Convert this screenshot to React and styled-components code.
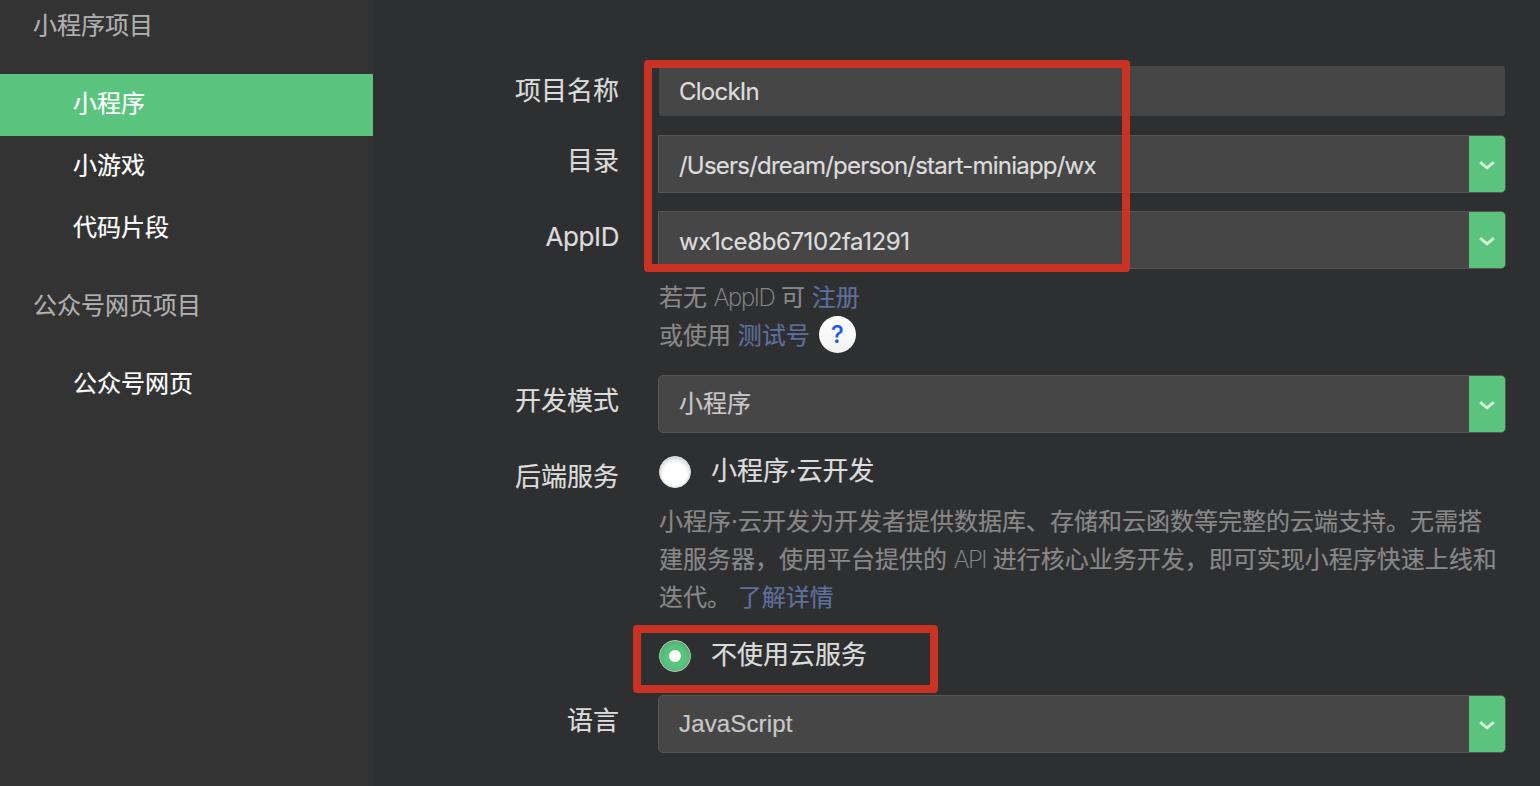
import React from "react";
import styled, { createGlobalStyle } from "styled-components";

const GREEN = "#5ac37d";

const GlobalStyle = createGlobalStyle`
  * { box-sizing: border-box; }
  body {
    margin: 0;
    background: #2e2f31;
    font-family: Inter, "Noto Sans CJK SC", sans-serif;
    overflow: hidden;
  }
`;

const Page = styled.div`
  position: relative;
  display: flex;
  width: 1540px;
  height: 786px;
  overflow: hidden;
  background: #2e2f31;
  white-space: nowrap;
  -webkit-text-stroke: 0.2px currentColor;
`;

const Sidebar = styled.nav`
  width: 373px;
  flex: none;
  background: #333333;
`;

const GroupTitle = styled.h2`
  margin: 0;
  padding: 0 0 2px 33px;
  height: ${(p) => (p.$first ? 74 : 94)}px;
  padding-top: ${(p) => (p.$first ? 7 : 27)}px;
  line-height: 38px;
  font-size: 24px;
  font-weight: 400;
  color: #b0b0b0;
`;

const NavItem = styled.a`
  display: block;
  height: 62px;
  padding-left: 73px;
  line-height: 60px;
  font-size: 24px;
  color: #fff;
  background: ${(p) => (p.$active ? GREEN : "transparent")};
`;

const Form = styled.main`
  flex: 1;
  display: flex;
  flex-direction: column;
  padding: 66px 34px 0 0;
`;

const Row = styled.div`
  display: flex;
  align-items: flex-start;
  margin-top: ${(p) => p.$gap || 0}px;
`;

const Label = styled.label`
  width: 246px;
  margin-right: 39px;
  flex: none;
  text-align: right;
  line-height: ${(p) => p.$line || 52}px;
  font-size: 26px;
  letter-spacing: ${(p) => p.$spacing || 0}px;
  color: #dcdcdc;
`;

const Content = styled.div`
  flex: 1;
`;

const TextInput = styled.div`
  height: 50px;
  margin: 0 1px;
  padding-left: 20px;
  border-radius: 3px;
  background: #464646;
  line-height: 51px;
  font-size: 24px;
  letter-spacing: -0.75px;
  color: #dcdcdc;
`;

const SelectBox = styled.div`
  display: flex;
  height: 58px;
  border: 1px solid #575757;
  border-radius: ${(p) => (p.$editable ? "0 5px 5px 0" : "5px")};
  background: #464646;
  overflow: hidden;
`;

const SelectValue = styled.span`
  flex: 1;
  padding-left: 20px;
  line-height: ${(p) => p.$line || 60}px;
  font-family: ${(p) => (p.$plain ? '"Liberation Sans", "Noto Sans CJK SC", sans-serif' : "inherit")};
  font-size: 24px;
  letter-spacing: ${(p) => p.$spacing || 0}px;
  color: ${(p) => (p.$editable ? "#dcdcdc" : "#c8c8c8")};
`;

const Arrow = styled.span`
  display: flex;
  align-items: center;
  justify-content: center;
  width: 36px;
  background: ${GREEN};
`;

const Hint = styled.div`
  padding: 10px 0 0 1px;
  margin-bottom: -1px;
  line-height: 38px;
  font-size: 24px;
  color: #888888;
`;

const HintLine = styled.div`
  display: flex;
  height: 38px;
  white-space: pre;
`;

const Latin = styled.span`
  font-weight: 200;
  letter-spacing: ${(p) => p.$spacing || 0}px;
`;

const Link = styled.a`
  color: #5f6f9c;
`;

const HelpButton = styled.span`
  width: 37px;
  height: 37px;
  margin: -1px 0 0 9px;
  border-radius: 50%;
  background: linear-gradient(#ffffff, #f2f2f2);
  color: #1f5af0;
  text-align: center;
  line-height: 38px;
  font-size: 24px;
  font-weight: 500;
`;

const RadioRow = styled.div`
  display: flex;
  align-items: center;
  height: 42px;
  margin-top: ${(p) => p.$gap || 0}px;
  padding-left: 1px;
`;

const RadioDot = styled.span`
  display: flex;
  align-items: center;
  justify-content: center;
  width: 32px;
  height: 32px;
  margin-right: 20px;
  border-radius: 50%;
  border: 1px solid ${(p) => (p.$checked ? "#b9c4bc" : "#d8d8d8")};
  background: ${(p) => (p.$checked ? GREEN : "#fff")};
  box-shadow: inset 0 ${(p) => (p.$checked ? 1 : 2)}px 4px rgba(0, 0, 0, 0.2);

  &::after {
    content: "";
    width: 12px;
    height: 12px;
    border-radius: 50%;
    background: ${(p) => (p.$checked ? "#fff" : "transparent")};
  }
`;

const RadioText = styled.span`
  height: 42px;
  line-height: 40px;
  font-size: 26px;
  color: #dcdcdc;
`;

const Highlight = styled.div`
  position: absolute;
  left: ${(p) => p.$x}px;
  top: ${(p) => p.$y}px;
  width: ${(p) => p.$w}px;
  height: ${(p) => p.$h}px;
  border: 8px solid #c93323;
  border-radius: 4px;
  pointer-events: none;
`;

function Select({ children, editable, ...rest }) {
  return (
    <SelectBox $editable={editable}>
      <SelectValue $editable={editable} {...rest}>{children}</SelectValue>
      <Arrow>
        <svg width="18" height="12" viewBox="0 0 18 12" fill="none">
          <path d="M2.2 4.2L9 9.8L15.8 4.2" stroke="#d3f0dc" strokeWidth="3" />
        </svg>
      </Arrow>
    </SelectBox>
  );
}

export default function App() {
  return (
    <>
      <GlobalStyle />
      <Page>
        <Sidebar>
          <GroupTitle $first>小程序项目</GroupTitle>
          <NavItem $active>小程序</NavItem>
          <NavItem>小游戏</NavItem>
          <NavItem>代码片段</NavItem>
          <GroupTitle>公众号网页项目</GroupTitle>
          <NavItem>公众号网页</NavItem>
        </Sidebar>
        <Form>
          <Row>
            <Label $line={50}>项目名称</Label>
            <Content>
              <TextInput>ClockIn</TextInput>
            </Content>
          </Row>
          <Row $gap={19}>
            <Label>目录</Label>
            <Content>
              <Select editable $spacing={-0.78}>/Users/dream/person/start-miniapp/wx</Select>
            </Content>
          </Row>
          <Row $gap={18}>
            <Label $spacing={-0.4}>AppID</Label>
            <Content>
              <Select editable $spacing={-0.4}>wx1ce8b67102fa1291</Select>
              <Hint>
                <HintLine>
                  若无 <Latin $spacing={-1.4}>AppID</Latin> 可 <Link>注册</Link>
                </HintLine>
                <HintLine>
                  或使用 <Link>测试号</Link>
                  <HelpButton>?</HelpButton>
                </HintLine>
              </Hint>
            </Content>
          </Row>
          <Row $gap={21}>
            <Label>开发模式</Label>
            <Content>
              <Select $line={56}>小程序</Select>
            </Content>
          </Row>
          <Row $gap={18}>
            <Label>后端服务</Label>
            <Content>
              <RadioRow>
                <RadioDot />
                <RadioText>小程序·云开发</RadioText>
              </RadioRow>
              <Hint>
                <HintLine>小程序·云开发为开发者提供数据库、存储和云函数等完整的云端支持。无需搭</HintLine>
                <HintLine>
                  建服务器，使用平台提供的 <Latin $spacing={-1.5}>API</Latin> 进行核心业务开发，即可实现小程序快速上线和
                </HintLine>
                <HintLine>
                  迭代。 <Link>了解详情</Link>
                </HintLine>
              </Hint>
              <RadioRow $gap={19}>
                <RadioDot $checked />
                <RadioText>不使用云服务</RadioText>
              </RadioRow>
            </Content>
          </Row>
          <Row $gap={18}>
            <Label>语言</Label>
            <Content>
              <Select $plain $line={55} $spacing={0.15}>JavaScript</Select>
            </Content>
          </Row>
        </Form>
        <Highlight $x={644} $y={60} $w={486} $h={212} />
        <Highlight $x={633} $y={625} $w={305} $h={68} />
      </Page>
    </>
  );
}
